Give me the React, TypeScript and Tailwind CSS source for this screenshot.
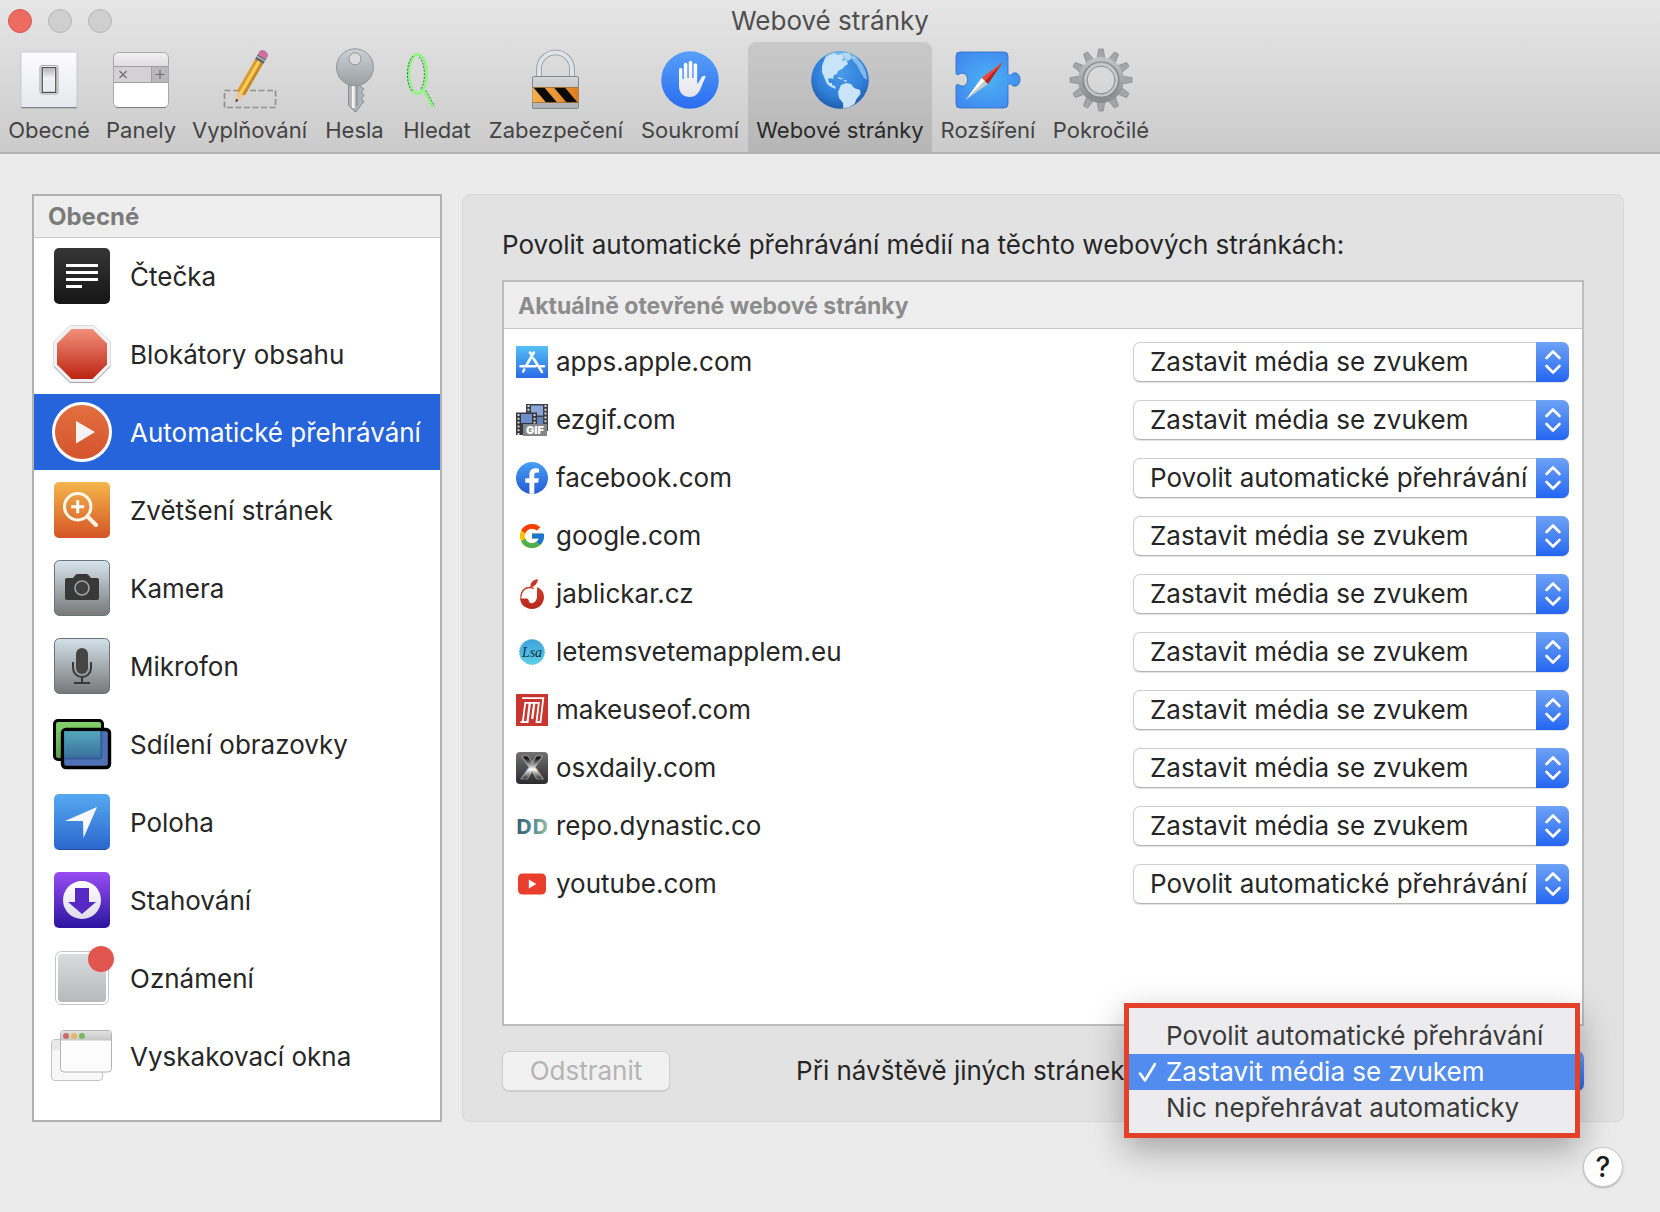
import { useState, type ReactNode } from 'react';
import { FcGoogle } from 'react-icons/fc';

type Policy = 'allow' | 'stop' | 'never';

const POLICIES: { value: Policy; label: string }[] = [
  { value: 'allow', label: 'Povolit automatické přehrávání' },
  { value: 'stop', label: 'Zastavit média se zvukem' },
  { value: 'never', label: 'Nic nepřehrávat automaticky' },
];

// Shared vertical gradient
function Grad({ id, from, to }: { id: string; from: string; to: string }) {
  return (
    <linearGradient id={id} x1="0" y1="0" x2="0" y2="1">
      <stop offset="0" stopColor={from} />
      <stop offset="1" stopColor={to} />
    </linearGradient>
  );
}

/* ---------- toolbar icons, 64x64 ---------- */

const SwitchIcon = (
  <>
    <Grad id="sw-plate" from="#fdfdfe" to="#e6e7ec" />
    <Grad id="sw-knob" from="#b9b9bb" to="#fbfbfb" />
    <rect x="4" y="4" width="56" height="56" rx="1.5" fill="url(#sw-plate)" stroke="#c3c4c9" strokeWidth="0.8" />
    <path d="M4 59.6h56" stroke="#85878c" strokeWidth="1.2" />
    <rect x="23" y="17.5" width="18" height="28.5" rx="2" fill="#f5f5f5" stroke="#a5a5a7" strokeWidth="1" />
    <rect x="25.2" y="19.7" width="13.6" height="24.6" fill="#fff" stroke="#3b3b3d" strokeWidth="1.2" />
    <rect x="26.2" y="20.7" width="11.6" height="11" fill="url(#sw-knob)" />
    <rect x="26.2" y="31.5" width="11.6" height="11.8" fill="#ececee" />
  </>
);

const TabsIcon = (
  <>
    <Grad id="tab-top" from="#f2f1f2" to="#dfdddf" />
    <rect x="4.5" y="4.5" width="55" height="55" rx="5" fill="#fff" />
    <path d="M4.5 18.5V9.5a5 5 0 0 1 5-5h45a5 5 0 0 1 5 5v9z" fill="url(#tab-top)" />
    <path d="M4.5 18.5h38v16h-38z" fill="#d3d1d3" />
    <path d="M42.5 18.5h17v16h-17z" fill="#b9b8ba" />
    <path d="M4.5 18.5h55M4.5 34.5h55M42.5 18.5v16" stroke="#a09fa1" strokeWidth="1" />
    <path d="M10.5 23l7 7M17.5 23l-7 7M46.5 26.5h9M51 22v9" stroke="#6d6c6e" strokeWidth="1.1" />
    <rect x="4.5" y="4.5" width="55" height="55" rx="5" fill="none" stroke="#a8a8aa" strokeWidth="1" />
    <path d="M7 59.6h50" stroke="#7d7d7f" strokeWidth="1" />
  </>
);

const PencilIcon = (
  <>
    <rect x="6.5" y="42.5" width="51" height="17" fill="none" stroke="#919191" strokeWidth="1.7" strokeDasharray="6 2.5" />
    <g transform="translate(17.5 54.5) rotate(30)">
      <path d="M0 0L-4.6 -11h9.2z" fill="#ecc796" />
      <path d="M0 0L-1.4 -3.4h2.8z" fill="#333" />
      <path d="M-4.6 -11V-48h3.2v37.6z" fill="#dc9a2a" />
      <path d="M-1.6 -10.4V-48h3.4v37.6z" fill="#f8cf55" />
      <path d="M1.6 -10.4V-48h3v37z" fill="#c98a25" />
      <rect x="-4.8" y="-53" width="9.6" height="5.5" fill="#62666b" />
      <path d="M-4.8 -50.8h9.6" stroke="#c1c5c9" strokeWidth="1.2" />
      <path d="M-4.8 -53v-3a4.8 3.6 0 0 1 9.6 0v3z" fill="#cd6f9f" />
    </g>
  </>
);

const KeyIcon = (
  <>
    <Grad id="key-head" from="#ccd1d4" to="#999fa3" />
    <path d="M25.5 35h11.500v3l4 3-2.500 3 2.500 3.500-2.500 3 2.500 3.500-3 3-4.500 6.500h-2l-6-6z" fill="#b0b4b7" stroke="#85898c" strokeWidth="0.9" />
    <path d="M30.300 37v23" stroke="#f0f1f2" strokeWidth="2.800" />
    <path d="M34 37v21" stroke="#7f8386" strokeWidth="1" />
    <path fillRule="evenodd" d="M32 .8a18.500 18.500 0 1 1 0 37a18.500 18.500 0 0 1 0-37zM32 4.800a6 6 0 1 0 0 12a6 6 0 0 0 0-12z" fill="url(#key-head)" stroke="#8b9093" strokeWidth="0.9" />
  </>
);

const LoupeIcon = (
  <>
    <ellipse cx="12.500" cy="26" rx="9" ry="19.500" fill="none" stroke="#8ff57e" strokeWidth="3" />
    <path d="M8 8C1 14 .5 36 7 43M14 9C21 15 21 36 15 42" fill="none" stroke="#1f4a5c" strokeWidth="0.8" strokeDasharray="2 1.500" />
    <path d="M19 42.500L28 59" stroke="#8ff57e" strokeWidth="2.800" />
    <path d="M21 42.500L29.500 58" stroke="#255b45" strokeWidth="0.8" strokeDasharray="2 1.500" />
  </>
);

const LockIcon = (
  <>
    <Grad id="lock-body" from="#d3d5d8" to="#aeb1b5" />
    <linearGradient id="lock-band">
      <stop offset="0" stopColor="#f6b04b" />
      <stop offset="1" stopColor="#df7d22" />
    </linearGradient>
    <clipPath id="lock-clip">
      <rect x="8.500" y="39.500" width="46" height="15" />
    </clipPath>
    <path d="M15 30V21a16.500 16.500 0 0 1 33 0V30" fill="none" stroke="#8f979f" strokeWidth="5.600" />
    <path d="M15 30V21a16.500 16.500 0 0 1 33 0V30" fill="none" stroke="#dde3e8" strokeWidth="4" />
    <rect x="8.500" y="28.500" width="46" height="32" rx="1.500" fill="url(#lock-body)" stroke="#85888c" strokeWidth="1" />
    <g clipPath="url(#lock-clip)">
      <rect x="8" y="39" width="47" height="16" fill="url(#lock-band)" />
      <path d="M9 39h11l13.500 16h-11zM29.500 39h11L54 55H43z" fill="#0c0a08" />
    </g>
    <path d="M8.500 39.500h46M8.500 54.500h46" stroke="#a06a2c" strokeWidth="0.8" />
  </>
);

const HandIcon = (
  <>
    <Grad id="hand-bg" from="#56a0f8" to="#2a6cf0" />
    <Grad id="hand-fg" from="#ffffff" to="#e3e3ea" />
    <circle cx="32" cy="32" r="28.800" fill="url(#hand-bg)" />
    <g transform="translate(-1 0)">
      <path d="M22 34V21.500a1.700 1.700 0 0 1 3.400 0V31h1.400V16.500a1.800 1.800 0 0 1 3.600 0V30h1.300V14.500a1.800 1.800 0 0 1 3.600 0V30h1.300V17a1.800 1.800 0 0 1 3.600 0V36c1.500-1.200 2.600-3.400 3.700-5.800.6-1.400 2.600-2.800 4.300-2.200.7.300.4 1 .1 1.500-2.300 4.300-3.300 8.500-5.300 12.300C40.800 46.500 37.500 49 33 49c-7 0-11-4.500-11-11z" fill="url(#hand-fg)" />
    </g>
  </>
);

const GlobeIcon = (
  <>
    <radialGradient id="globe-bg" cx="0.5" cy="0.35" r="0.68">
      <stop offset="0" stopColor="#4a9cec" />
      <stop offset="0.65" stopColor="#2f7fd9" />
      <stop offset="1" stopColor="#1b58a8" />
    </radialGradient>
    <clipPath id="globe-clip">
      <circle cx="32" cy="32" r="28.500" />
    </clipPath>
    <circle cx="32" cy="32" r="28.800" fill="url(#globe-bg)" />
    <g clipPath="url(#globe-clip)">
      <ellipse cx="33" cy="7" rx="17" ry="6" fill="#8fd6ee" opacity="0.6" />
      <g fill="#c9e3f8">
        <path d="M17 10l4-3 5-2 4 2 4-1 2 4-3 2 3 1 2-2 2 5-3 2-3 3-4 2-1 3-3 1-1 4-3-1-2 1 1 4 3 0 0 2 3 1 1 3-5-2-4-3-3-7-2-5 0-6z" />
        <path d="M34 5l7 0 3 4-4 4-4-4z" opacity="0.75" />
        <path d="M44 8l5 2 5 6 4 8 1 8-3-2-4-7-3-6-4-4z" opacity="0.55" />
        <path d="M33 37l5-2 5 1 3 4 6 2 .500 4-4 5-2 5-5 3-4 5-2-1-.500-8-4-5-1-6z" />
        <path d="M30 29l5 1.500-1 1-4-1zM36 32l3 .500-.500 1.200-3-.500z" />
      </g>
    </g>
  </>
);

const PuzzleIcon = (
  <>
    <radialGradient id="puz-bg" cx="0.5" cy="0.5" r="0.6">
      <stop offset="0" stopColor="#4bb3f4" />
      <stop offset="1" stopColor="#4189f0" />
    </radialGradient>
    <path
      d="M4 4h44a4 4 0 0 1 4 4v17.500c0 2 2 2.300 3.500.8 3.500-3.300 8.500-.8 8.500 5.200s-5 8.500-8.500 5.200c-1.500-1.500-3.500-1.200-3.500.8V56a4 4 0 0 1-4 4H4a4 4 0 0 1-4-4V38.500c0-2 1.500-2.500 3-1.500 4 2.500 8.500.500 8.500-5.300S7 23.800 3 26.300c-1.500 1-3 .500-3-1.500V8a4 4 0 0 1 4-4z"
      fill="url(#puz-bg)"
      stroke="#2c69c4"
      strokeWidth="0.8"
    />
    <path d="M47 14L25.500 30l4 3.200z" fill="#f0685b" />
    <path d="M47 14L32 36l-3.500-3z" fill="#b5221d" />
    <path d="M47 14L26 29.500l3.200 3.200z" fill="#e8483e" />
    <path d="M9.500 52L25.500 30l3.500 3z" fill="#fff" />
    <path d="M9.500 52L28.500 33l3.500 3z" fill="#c6cad0" />
  </>
);

const GearIcon = (
  <>
    <Grad id="gear-fg" from="#c3c5c7" to="#868889" />
    {Array.from({ length: 12 }, (_, i) => (
      <path
        key={i}
        d="M28.200 10L29.700 1h4.600L35.800 10z"
        transform={`rotate(${i * 30} 32 32)`}
        fill="#a3a5a7"
        stroke="#8c8e90"
        strokeWidth="0.8"
        strokeLinejoin="round"
      />
    ))}
    <path fillRule="evenodd" d="M32 9a23 23 0 1 1 0 46a23 23 0 0 1 0-46zM32 18a14 14 0 1 0 0 28a14 14 0 0 0 0-28z" fill="url(#gear-fg)" />
    <circle cx="32" cy="32" r="18" fill="none" stroke="#85878a" strokeWidth="1.200" />
    <circle cx="32" cy="32" r="15.500" fill="none" stroke="#c9cbcd" strokeWidth="2" />
    <circle cx="32" cy="32" r="13.800" fill="none" stroke="#7c7e80" strokeWidth="0.8" />
  </>
);

/* ---------- sidebar icons, 60x60 ---------- */

const ReaderIcon = (
  <>
    <Grad id="read-bg" from="#363636" to="#151515" />
    <rect x="2" y="2" width="56" height="56" rx="5" fill="url(#read-bg)" />
    <path d="M14 19.500h32M14 26.500h32M14 33.500h32M14 40.500h16" stroke="#fff" strokeWidth="3" />
  </>
);

const StopIcon = (
  <>
    <Grad id="stop-bg" from="#f1907a" to="#bd2412" />
    <path d="M18 1.500h24L58.500 18v24L42 58.500H18L1.500 42V18z" fill="#f2f2f4" stroke="#dcdce0" strokeWidth="1" />
    <path d="M2 42.500L18 58.500h24L58 42.500" fill="none" stroke="#a2a2a6" strokeWidth="1" />
    <path d="M19.500 5h21L55 19.500v21L40.500 55h-21L5 40.500v-21z" fill="url(#stop-bg)" />
  </>
);

const PlayIcon = (
  <>
    <Grad id="play-bg" from="#e2703f" to="#d4532e" />
    <circle cx="30" cy="30" r="28.500" fill="url(#play-bg)" stroke="#fff" strokeWidth="3" />
    <path d="M24 19l19 11-19 11.500z" fill="#f5f3f2" />
  </>
);

const ZoomIcon = (
  <>
    <Grad id="zoom-bg" from="#f3b64b" to="#d65426" />
    <rect x="2" y="2" width="56" height="56" rx="5" fill="url(#zoom-bg)" />
    <circle cx="25.700" cy="26.700" r="13.200" fill="none" stroke="#fff8e8" strokeWidth="3" />
    <path d="M19.200 26.700h13M25.700 20.200v13" stroke="#fff" strokeWidth="3" />
    <path d="M35.500 36.500l8.500 8.500" stroke="#fff4e4" strokeWidth="4" strokeLinecap="round" />
  </>
);

const CameraIcon = (
  <>
    <Grad id="cam-bg" from="#d7e5ed" to="#777777" />
    <rect x="2.500" y="2.500" width="55" height="55" rx="5" fill="url(#cam-bg)" stroke="#6b737b" strokeWidth="1" />
    <path d="M15 20h6l3-3.500q.500-.500 1.500-.500h9q1 0 1.500.500l3 3.500h6a2 2 0 0 1 2 2v18a2 2 0 0 1-2 2H15a2 2 0 0 1-2-2V22a2 2 0 0 1 2-2z" fill="#383838" />
    <circle cx="30" cy="30" r="7" fill="#404040" stroke="#a3a3a3" strokeWidth="1.600" />
  </>
);

const MicIcon = (
  <>
    <Grad id="mic-bg" from="#d3e1ea" to="#777777" />
    <rect x="2.500" y="2.500" width="55" height="55" rx="5" fill="url(#mic-bg)" stroke="#6b737b" strokeWidth="1" />
    <rect x="24" y="12" width="12" height="26" rx="6" fill="#454545" />
    <path d="M21 26v6a9 9 0 0 0 18 0v-6M30 41v6M22 47h16" fill="none" stroke="#383838" strokeWidth="2" />
  </>
);

const ScreensIcon = (
  <>
    <Grad id="scr-a" from="#86d56c" to="#5c9a4c" />
    <Grad id="scr-b" from="#4f9fbb" to="#4668ad" />
    <Grad id="scr-c" from="#54a7bb" to="#3a719f" />
    <rect x="2.500" y="6.500" width="48" height="39" rx="3.500" fill="url(#scr-a)" stroke="#000" strokeWidth="3" />
    <rect x="10.500" y="15.500" width="47" height="38" rx="3.500" fill="#4f72b6" stroke="#000" strokeWidth="3.400" />
    <path d="M12.200 17.200h38.300v25a3.500 3.500 0 0 1-3.500 3.500H12.200z" fill="#35609d" />
    <path d="M12.200 17.200h36v22.500a3.500 3.500 0 0 1-3.500 3.500H12.200z" fill="url(#scr-c)" />
  </>
);

const LocationIcon = (
  <>
    <Grad id="loc-bg" from="#56a9f1" to="#2b66cd" />
    <rect x="2" y="2" width="56" height="56" rx="5" fill="url(#loc-bg)" />
    <path d="M6 57.500h48" stroke="#2250a8" strokeWidth="1" />
    <path d="M45 15L31.500 46 31 29H13z" fill="#f6f8fd" />
  </>
);

const DownloadIcon = (
  <>
    <Grad id="dl-bg" from="#9a4df3" to="#2a159f" />
    <Grad id="dl-fg" from="#ffffff" to="#dedced" />
    <rect x="2" y="2" width="56" height="56" rx="5" fill="url(#dl-bg)" />
    <circle cx="30" cy="30" r="19" fill="url(#dl-fg)" />
    <path d="M23 18h14v14h7L30 44 16 32h7z" fill="#5628c4" />
  </>
);

const NotificationIcon = (
  <>
    <Grad id="not-bg" from="#d9dbdc" to="#b6b8b9" />
    <rect x="3.500" y="3.500" width="53" height="53" rx="6" fill="#fff" stroke="#c4c4c4" strokeWidth="1" />
    <rect x="6" y="6" width="48" height="48" rx="4" fill="url(#not-bg)" />
    <circle cx="49" cy="11" r="13" fill="#e0564f" />
  </>
);

const PopupsIcon = (
  <>
    <Grad id="pop-bar" from="#e1e1e1" to="#c6c6c6" />
    <rect x="-.5" y="13.500" width="51" height="41" rx="3.500" fill="#f7f7f7" stroke="#c4c4c4" strokeWidth="1" />
    <path d="M0 17a3 3 0 0 1 3-3h6v10H0z" fill="#e8e8e8" />
    <rect x="8.500" y="4.500" width="51" height="41.500" rx="3.500" fill="#fcfcfc" stroke="#b4b4b4" strokeWidth="1" />
    <path d="M9 14.500V8a3 3 0 0 1 3-3h44a3 3 0 0 1 3 3v6.500z" fill="url(#pop-bar)" />
    <circle cx="14" cy="10" r="3" fill="#c96c65" />
    <circle cx="22" cy="10" r="3" fill="#e4b763" />
    <circle cx="30" cy="10" r="3" fill="#79b966" />
  </>
);

/* ---------- favicons, 32x32 ---------- */

const AppStoreFav = (
  <>
    <Grad id="as-bg" from="#54bff6" to="#2b6be6" />
    <rect width="32" height="32" fill="url(#as-bg)" />
    <path d="M17.800 6.500L10 20M14 6.500l2 3M17.500 12.500L26 26M4.500 20.200h15M24 20.200h4M8.200 23.500L7.200 25.500" stroke="#fff" strokeWidth="2.600" strokeLinecap="round" fill="none" />
  </>
);

const EzgifFav = (
  <>
    <rect x="10" y="0" width="22" height="27" fill="#3f4147" />
    <rect x="15" y="1.500" width="12" height="10" fill="#8ba6d8" />
    <rect x="15" y="13" width="12" height="10" fill="#6583bd" />
    <path d="M12.500 1v8M29.500 1v26" stroke="#d8d8d8" strokeWidth="2" strokeDasharray="2 1.800" />
    <rect x="0" y="8.500" width="21" height="22.500" fill="#35363b" />
    <rect x="5" y="10" width="11" height="9" fill="#6d8fc9" />
    <path d="M2.500 10v21M18.500 10v10" stroke="#d8d8d8" strokeWidth="2" strokeDasharray="2 1.800" />
    <rect x="7" y="20" width="24" height="12" fill="#85868a" />
    <text x="19" y="30" textAnchor="middle" fontSize="11" fontWeight="900" fontFamily="Inter, sans-serif" fill="#fff">GIF</text>
  </>
);

const FacebookFav = (
  <>
    <Grad id="fb-bg" from="#48a0f5" to="#2459d2" />
    <circle cx="16" cy="16" r="16" fill="url(#fb-bg)" />
    <path d="M13.400 31.800V20.800H9.300v-4.600h4.100v-3.500c0-4.200 2.400-6.400 6.100-6.400 1.300 0 2.700.2 3.500.4v3.900h-2c-2 0-2.700 1.200-2.700 2.500v3.100h4.500l-.7 4.600h-3.800v11z" fill="#fff" />
  </>
);

const GoogleFav = (
  <svg x="1.500" y="1.500" width="29" height="29" viewBox="0 0 48 48">
    <FcGoogle size={48} />
  </svg>
);

const JablickarFav = (
  <>
    <Grad id="jab-bg" from="#d23a2b" to="#b62a1c" />
    <path d="M21 9.200C25.500 10.500 28 14.500 28 19c0 6.500-5 12-12 12S4 26 4 19.500C6 21.500 9 20 11 20.500c2.500.800 1.500 4.700 4 4.700 3 0 6-2.400 6-7z" fill="url(#jab-bg)" />
    <path d="M4.800 19.500C4.500 14 8.500 9.500 13 9.500c2 0 3 .800 4.800.800" fill="none" stroke="#c93527" strokeWidth="1.400" />
    <path d="M21.800 1C17 1.800 13.800 5 14.500 9.500 18 9 21.800 5.500 21.800 1z" fill="#c73426" />
  </>
);

const LsaFav = (
  <>
    <Grad id="lsa-bg" from="#3ea2dc" to="#5ed0e8" />
    <circle cx="16" cy="16" r="12.500" fill="url(#lsa-bg)" stroke="#4cb6df" strokeWidth="1" strokeDasharray="1.500 1.500" />
    <text x="16" y="21" textAnchor="middle" fontSize="14" fontStyle="italic" fontFamily="Liberation Serif, serif" fill="#10303c">Lsa</text>
  </>
);

const MakeUseOfFav = (
  <>
    <rect width="32" height="32" fill="#c9362f" />
    <path d="M6 4.200H27.300L24.500 28H20.500L22.800 8.800H9.200L6.800 28H4.500" fill="none" stroke="#fff" strokeWidth="1.800" />
    <path d="M13.800 9L11.500 28H6.500M18.300 9L16.200 25" fill="none" stroke="#fff" strokeWidth="2.200" />
  </>
);

const OsxDailyFav = (
  <>
    <Grad id="osx-bg" from="#717171" to="#2c2c2c" />
    <linearGradient id="osx-fg" x1="0" y1="0" x2="0" y2="1">
      <stop offset="0.250" stopColor="#111" />
      <stop offset="0.550" stopColor="#fff" />
      <stop offset="0.800" stopColor="#333" />
    </linearGradient>
    <rect width="32" height="32" rx="4" fill="url(#osx-bg)" />
    <text x="16" y="27" textAnchor="middle" fontSize="31" fontWeight="800" fontFamily="Inter, sans-serif" fill="url(#osx-fg)" stroke="#b9b9b9" strokeWidth="0.700">X</text>
  </>
);

const DynasticFav = (
  <>
    <linearGradient id="dd-fg">
      <stop offset="0" stopColor="#3a5a70" />
      <stop offset="0.500" stopColor="#4c8a96" />
      <stop offset="1" stopColor="#9dbb9c" />
    </linearGradient>
    <text x="16" y="24" textAnchor="middle" fontSize="22" fontWeight="700" fontFamily="Open Sans, sans-serif" fill="url(#dd-fg)">DD</text>
  </>
);

const YoutubeFav = (
  <>
    <rect x="2" y="5.500" width="28" height="21" rx="4.500" fill="#ea3d2c" />
    <path d="M12.800 11.500l7.500 4.500-7.500 4.500z" fill="#fff" />
  </>
);

/* ---------- data ---------- */

const TOOLBAR: { label: string; width: string; icon: ReactNode }[] = [
  { label: 'Obecné', width: 'w-[98px]', icon: SwitchIcon },
  { label: 'Panely', width: 'w-[86px]', icon: TabsIcon },
  { label: 'Vyplňování', width: 'w-[131px]', icon: PencilIcon },
  { label: 'Hesla', width: 'w-[79px]', icon: KeyIcon },
  { label: 'Hledat', width: 'w-[86px]', icon: LoupeIcon },
  { label: 'Zabezpečení', width: 'w-[152px]', icon: LockIcon },
  { label: 'Soukromí', width: 'w-[116px]', icon: HandIcon },
  { label: 'Webové stránky', width: 'w-[184px]', icon: GlobeIcon },
  { label: 'Rozšíření', width: 'w-[112px]', icon: PuzzleIcon },
  { label: 'Pokročilé', width: 'w-[114px]', icon: GearIcon },
];

const CATEGORIES: { label: string; icon: ReactNode }[] = [
  { label: 'Čtečka', icon: ReaderIcon },
  { label: 'Blokátory obsahu', icon: StopIcon },
  { label: 'Automatické přehrávání', icon: PlayIcon },
  { label: 'Zvětšení stránek', icon: ZoomIcon },
  { label: 'Kamera', icon: CameraIcon },
  { label: 'Mikrofon', icon: MicIcon },
  { label: 'Sdílení obrazovky', icon: ScreensIcon },
  { label: 'Poloha', icon: LocationIcon },
  { label: 'Stahování', icon: DownloadIcon },
  { label: 'Oznámení', icon: NotificationIcon },
  { label: 'Vyskakovací okna', icon: PopupsIcon },
];

const SITES: { host: string; policy: Policy; icon: ReactNode }[] = [
  { host: 'apps.apple.com', policy: 'stop', icon: AppStoreFav },
  { host: 'ezgif.com', policy: 'stop', icon: EzgifFav },
  { host: 'facebook.com', policy: 'allow', icon: FacebookFav },
  { host: 'google.com', policy: 'stop', icon: GoogleFav },
  { host: 'jablickar.cz', policy: 'stop', icon: JablickarFav },
  { host: 'letemsvetemapplem.eu', policy: 'stop', icon: LsaFav },
  { host: 'makeuseof.com', policy: 'stop', icon: MakeUseOfFav },
  { host: 'osxdaily.com', policy: 'stop', icon: OsxDailyFav },
  { host: 'repo.dynastic.co', policy: 'stop', icon: DynasticFav },
  { host: 'youtube.com', policy: 'allow', icon: YoutubeFav },
];

interface PolicySelectProps {
  id: string;
  label?: string;
  value: Policy;
  onChange: (value: Policy) => void;
}

function PolicySelect({ id, label, value, onChange }: PolicySelectProps) {
  return (
    <div className="relative h-10">
      <select
        id={id}
        aria-label={label}
        value={value}
        onChange={(e) => onChange(e.target.value as Policy)}
        className="h-10 w-full appearance-none rounded-[7px] border border-[#cfcfcf] border-b-[#b5b5b5] bg-white pr-9 pl-4 text-[26px] leading-8 text-[#262626] shadow-[0_1px_1px_rgba(0,0,0,0.12)]"
      >
        {POLICIES.map((p) => (
          <option key={p.value} value={p.value}>
            {p.label}
          </option>
        ))}
      </select>
      <span className="pointer-events-none absolute inset-y-0 right-0 flex w-[33px] items-center justify-center rounded-r-[7px] bg-linear-to-b from-[#6ea2f5] to-[#2465f2]">
        <svg width="18" height="28" viewBox="0 0 18 28" fill="none" stroke="#fff" strokeWidth="2.6" strokeLinecap="round" strokeLinejoin="round">
          <path d="M2.500 10L9 3.500l6.500 6.500M2.500 18L9 24.500l6.500-6.500" />
        </svg>
      </span>
    </div>
  );
}

export default function App() {
  const [tab, setTab] = useState('Webové stránky');
  const [category, setCategory] = useState('Automatické přehrávání');
  const [sites, setSites] = useState(SITES);
  const [fallback, setFallback] = useState<Policy>('stop');

  const updateSite = (host: string, policy: Policy) =>
    setSites((prev) => prev.map((s) => (s.host === host ? { ...s, policy } : s)));

  return (
    <div className="flex min-h-screen flex-col bg-[#ebebeb] font-['Inter',sans-serif] text-[26px] leading-8 text-[#262626]">
      <header className="border-b-2 border-[#b3b3b3] bg-linear-to-b from-[#e6e6e6] to-[#cbcbcb]">
        <div className="flex h-[42px] items-center px-2">
          <div className="flex flex-1 gap-4">
            <button aria-label="Zavřít" className="size-6 rounded-full border border-[#d9574c] bg-[#ed6b60]" />
            <button aria-label="Minimalizovat" className="size-6 rounded-full border border-[#b6b6b6] bg-[#cfcfcf]" />
            <button aria-label="Zvětšit" className="size-6 rounded-full border border-[#b6b6b6] bg-[#cfcfcf]" />
          </div>
          <h1 className="text-[#4f4f4f]">Webové stránky</h1>
          <div className="flex-1" />
        </div>
        <nav className="flex">
          {TOOLBAR.map((item) => (
            <button
              key={item.label}
              onClick={() => setTab(item.label)}
              className={`flex shrink-0 flex-col items-center rounded-t-lg pt-[6px] pb-2 text-[22px] leading-7 whitespace-nowrap ${item.width} ${
                tab === item.label ? 'bg-linear-to-b from-[#c9c9c9] to-[#b6b6b6] text-[#2a2a2a]' : 'text-[#444]'
              }`}
            >
              <svg width="64" height="64" viewBox="0 0 64 64" className="mb-1 overflow-visible">
                {item.icon}
              </svg>
              {item.label}
            </button>
          ))}
        </nav>
      </header>

      <main className="flex flex-1 flex-col px-8 pt-10 pb-[25px]">
        <div className="flex flex-1 gap-5">
          <aside className="w-[410px] shrink-0 border-2 border-[#b1b1b1] bg-white">
            <h2 className="border-b border-[#c8c8c8] bg-[#eeeeee] px-[14px] pt-[5px] pb-1 text-2xl leading-8 font-bold text-[#7b7b7b]">Obecné</h2>
            <ul className="flex flex-col gap-[2px]">
              {CATEGORIES.map((item) => (
                <li key={item.label}>
                  <button
                    onClick={() => setCategory(item.label)}
                    className={`flex h-[76px] w-full items-center gap-[18px] pl-[18px] whitespace-nowrap ${
                      category === item.label ? 'bg-[#2564da] text-white' : ''
                    }`}
                  >
                    <svg width="60" height="60" viewBox="0 0 60 60" className="shrink-0 overflow-visible">
                      {item.icon}
                    </svg>
                    <span className="pt-[2px]">{item.label}</span>
                  </button>
                </li>
              ))}
            </ul>
          </aside>

          <section className="mr-1 flex flex-1 flex-col rounded-lg border border-[#d8d8d8] bg-[#e2e2e2] pt-[34px] pr-[39px] pb-[30px] pl-[39px]">
            <h2 className="mb-[19px]">Povolit automatické přehrávání médií na těchto webových stránkách:</h2>
            <div className="flex-1 border-2 border-[#bdbdbd] bg-white">
              <table className="w-full border-collapse">
                <thead>
                  <tr>
                    <th colSpan={2} className="h-[46px] border-b border-[#c8c8c8] bg-[#eeeeee] px-[14px] pt-[2px] text-left text-[23px] leading-7 font-bold text-[#8c8c8c]">
                      Aktuálně otevřené webové stránky
                    </th>
                  </tr>
                </thead>
                <tbody className="before:block before:h-1 before:content-['']">
                  {sites.map((site) => (
                    <tr key={site.host}>
                      <td className="h-[58px] pl-3">
                        <span className="flex items-center gap-2">
                          <svg width="32" height="32" viewBox="0 0 32 32" className="shrink-0 overflow-visible">
                            {site.icon}
                          </svg>
                          {site.host}
                        </span>
                      </td>
                      <td className="h-[58px] w-[449px] pr-[13px]">
                        <PolicySelect
                          id={`policy-${site.host}`}
                          label={site.host}
                          value={site.policy}
                          onChange={(policy) => updateSite(site.host, policy)}
                        />
                      </td>
                    </tr>
                  ))}
                </tbody>
              </table>
            </div>

            <div className="mt-[25px] flex items-center justify-between">
              <button disabled className="h-10 w-[168px] rounded-[7px] border border-[#cfcfcf] bg-[#f1f1f1] leading-8 text-[#b4b4b4] shadow-[0_1px_1px_rgba(0,0,0,0.1)]">
                Odstranit
              </button>
              <div className="flex items-center">
                <label htmlFor="policy-default" className="whitespace-nowrap">
                  Při návštěvě jiných stránek:
                </label>
                <div className="relative w-[452px]">
                  <PolicySelect id="policy-default" value={fallback} onChange={setFallback} />
                  {/* opened menu, laid over the select */}
                  <ul
                    role="listbox"
                    aria-label="Při návštěvě jiných stránek"
                    className="absolute right-1 -bottom-[47px] w-[456px] border-[5px] border-[#e5412a] bg-[#ececee] pt-[10px] pb-[7px] text-[#3a3a3a] shadow-[0_12px_32px_rgba(0,0,0,0.3)]"
                  >
                    {POLICIES.map((p) => (
                      <li
                        key={p.value}
                        role="option"
                        aria-selected={fallback === p.value}
                        onClick={() => setFallback(p.value)}
                        className={`flex h-9 items-center whitespace-nowrap ${fallback === p.value ? 'bg-[#528cee] text-white' : ''}`}
                      >
                        <span className="flex w-[37px] justify-center">
                          {fallback === p.value && (
                            <svg width="20" height="22" viewBox="0 0 20 22" fill="none" stroke="#fff" strokeWidth="2.6" strokeLinecap="round" strokeLinejoin="round">
                              <path d="M2 12.500L7 19.500 17 3" />
                            </svg>
                          )}
                        </span>
                        {p.label}
                      </li>
                    ))}
                  </ul>
                </div>
              </div>
            </div>
          </section>
        </div>

        <div className="mt-[25px] mr-[5px] flex justify-end">
          <button aria-label="Nápověda" className="size-10 rounded-full border border-[#cdcdcd] bg-white text-[28px] leading-8 font-medium text-[#1c1c1c] shadow-[0_1px_2px_rgba(0,0,0,0.25)]">
            ?
          </button>
        </div>
      </main>
    </div>
  );
}
